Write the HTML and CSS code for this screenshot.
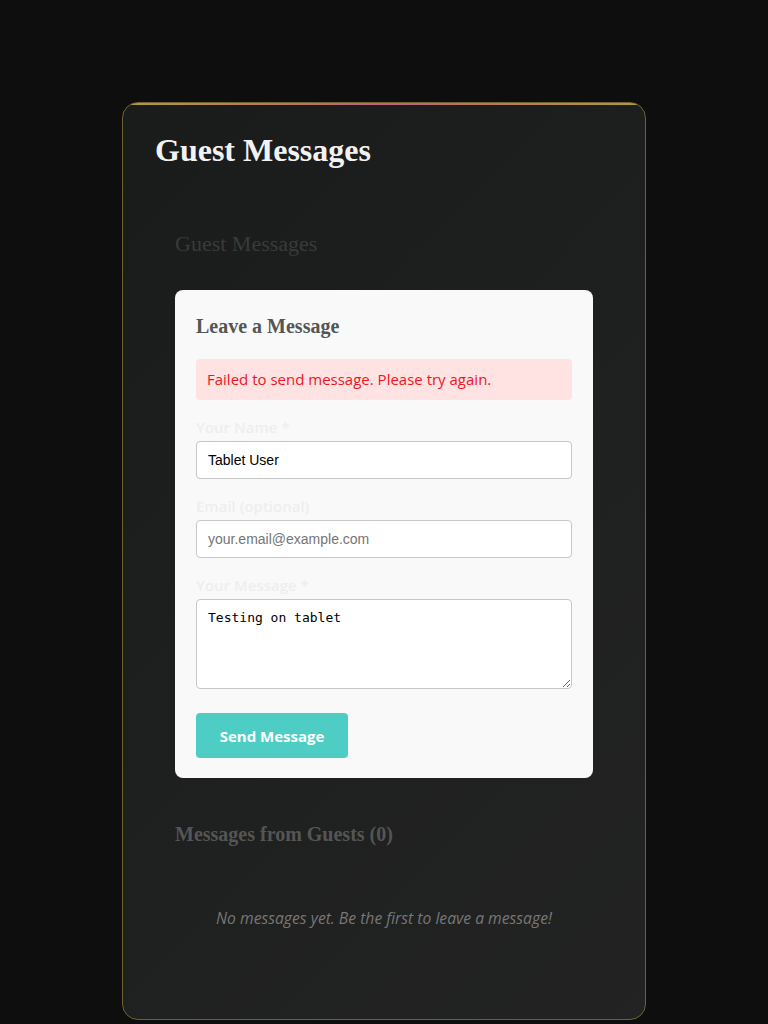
FILE: index.html
```html
<!DOCTYPE html>
<html lang="en">
<head>
<meta charset="utf-8">
<title>Guest Messages</title>
<link rel="stylesheet" href="styles.css">
</head>
<body>
<div class="page">
  <main class="card">
    <h1 class="card-title">Guest Messages</h1>
    <section class="guestbook">
      <h2 class="gb-title">Guest Messages</h2>
      <div class="form-card">
        <h3 class="form-title">Leave a Message</h3>
        <div class="error">Failed to send message. Please try again.</div>
        <form class="form">
          <div class="field">
            <label class="label">Your Name *</label>
            <input class="input" type="text" value="Tablet User">
          </div>
          <div class="field">
            <label class="label">Email (optional)</label>
            <input class="input" type="email" placeholder="your.email@example.com">
          </div>
          <div class="field">
            <label class="label">Your Message *</label>
            <textarea class="textarea">Testing on tablet</textarea>
          </div>
          <button class="btn" type="button">Send Message</button>
        </form>
      </div>
      <h3 class="list-title">Messages from Guests (0)</h3>
      <p class="empty">No messages yet. Be the first to leave a message!</p>
    </section>
  </main>
</div>
</body>
</html>
```

FILE: styles.css
```css
* { box-sizing: border-box; }
html, body { margin: 0; padding: 0; }
body {
  background: #0e0e0e;
  font-family: "Open Sans", "Noto Sans", sans-serif;
}
.page {
  padding: 102px 0 40px;
  display: flex;
  justify-content: center;
}
.card {
  position: relative;
  width: 524px;
  border: 1px solid #6e6330;
  border-radius: 16px;
  background: linear-gradient(135deg, #1a1b1b 0%, #1f2020 60%, #232323 100%);
  padding: 28px 32px 91px;
  overflow: hidden;
}
.card::before {
  content: "";
  position: absolute;
  left: 0; right: 0; top: 0;
  height: 2px;
  background: linear-gradient(90deg, #b09a3a 0%, #c0607a 50%, #b09a3a 100%);
}
.card-title {
  margin: 0;
  font-family: "Liberation Serif", serif;
  font-weight: bold;
  font-size: 32px;
  letter-spacing: 0;
  line-height: 38px;
  color: #f2f2f2;
}
.guestbook {
  padding: 61px 20px 0;
}
.gb-title {
  margin: 0 0 32px;
  font-family: "Liberation Serif", serif;
  font-weight: normal;
  font-size: 22px;
  line-height: 28px;
  color: #3a3a3a;
}
.form-card {
  background: #f9f9f9;
  border-radius: 8px;
  padding: 24px 21px 20px;
}
.form-title {
  margin: 0 0 21px;
  font-family: "Liberation Serif", serif;
  font-weight: bold;
  font-size: 20px;
  line-height: 24px;
  color: #555;
}
.error {
  background: #ffe3e3;
  color: #f0141e;
  border-radius: 4px;
  padding: 10px 11px;
  font-size: 15px;
  line-height: 21px;
  margin-bottom: 17px;
}
.form {
  display: flex;
  flex-direction: column;
}
.field {
  display: flex;
  flex-direction: column;
  margin-bottom: 17px;
}
.label {
  font-weight: 600;
  font-size: 15px;
  line-height: 20px;
  color: #eeeeee;
  margin-bottom: 4px;
}
.input, .textarea {
  width: 100%;
  border: 1px solid #c8c8c8;
  border-radius: 4px;
  background: #fff;
  padding: 0 11px;
  color: #000;
}
.input {
  height: 38px;
  font-family: "Liberation Sans", Arial, sans-serif;
  font-size: 14px;
}
.input::placeholder { color: #757575; }
.textarea {
  height: 90px;
  padding-top: 10px;
  font-family: "DejaVu Sans Mono", "Liberation Mono", monospace;
  font-size: 13px;
  resize: vertical;
}
.field:last-of-type { margin-bottom: 24px; }
.btn {
  align-self: flex-start;
  width: 152px;
  height: 45px;
  border: none;
  border-radius: 4px;
  background: #4ecdc4;
  color: #fff;
  font-family: "Open Sans", "Noto Sans", sans-serif;
  font-weight: bold;
  font-size: 15px;
}
.list-title {
  margin: 44px 0 0;
  font-family: "Liberation Serif", serif;
  font-weight: bold;
  font-size: 20px;
  line-height: 24px;
  color: #555;
}
.empty {
  margin: 62px 0 0;
  text-align: center;
  font-style: italic;
  font-size: 15.7px;
  line-height: 20px;
  color: #777;
}
```
